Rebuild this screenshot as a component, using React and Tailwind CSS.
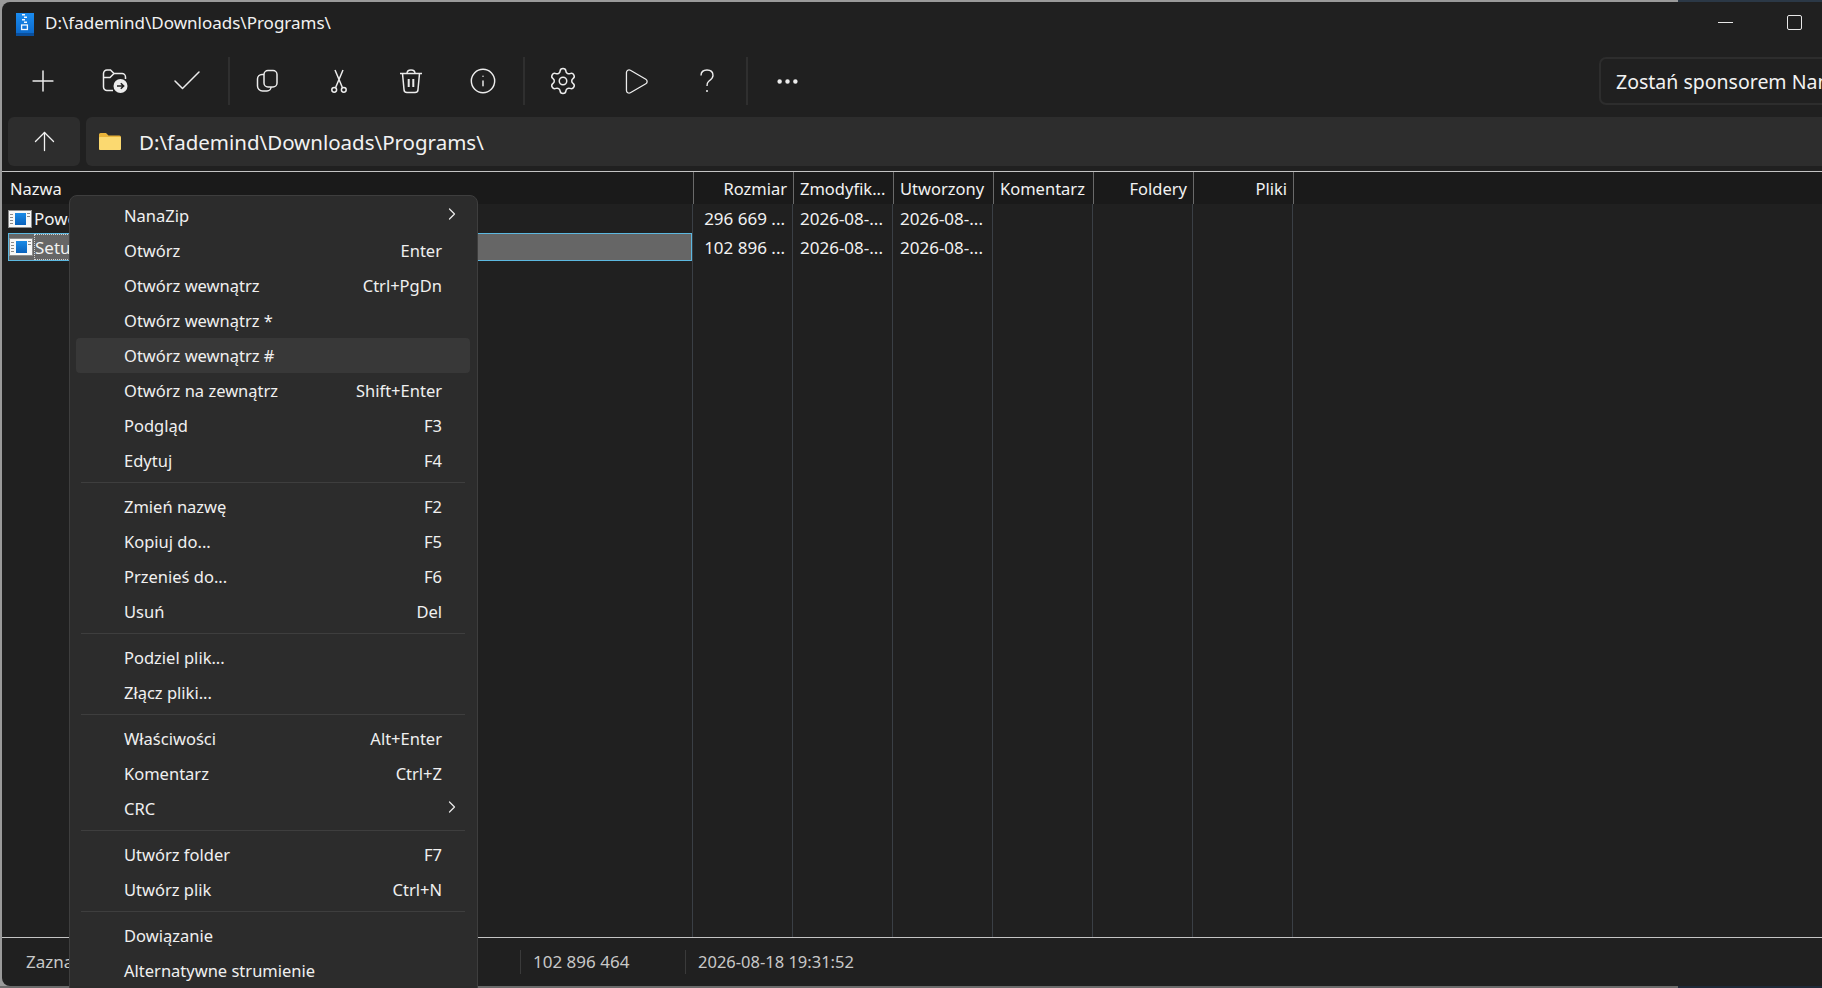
import React from 'react'
import { Plus, Check, Info, Settings, Play, MoreHorizontal, ArrowUp, ChevronRight } from 'lucide-react'

const font = "font-['Noto_Sans',sans-serif]"

const menu = [
  [{ t: 'NanaZip', arrow: true }, { t: 'Otwórz', k: 'Enter' }, { t: 'Otwórz wewnątrz', k: 'Ctrl+PgDn' }, { t: 'Otwórz wewnątrz *' }, { t: 'Otwórz wewnątrz #', hover: true }, { t: 'Otwórz na zewnątrz', k: 'Shift+Enter' }, { t: 'Podgląd', k: 'F3' }, { t: 'Edytuj', k: 'F4' }],
  [{ t: 'Zmień nazwę', k: 'F2' }, { t: 'Kopiuj do...', k: 'F5' }, { t: 'Przenieś do...', k: 'F6' }, { t: 'Usuń', k: 'Del' }],
  [{ t: 'Podziel plik...' }, { t: 'Złącz pliki...' }],
  [{ t: 'Właściwości', k: 'Alt+Enter' }, { t: 'Komentarz', k: 'Ctrl+Z' }, { t: 'CRC', arrow: true }],
  [{ t: 'Utwórz folder', k: 'F7' }, { t: 'Utwórz plik', k: 'Ctrl+N' }],
  [{ t: 'Dowiązanie' }, { t: 'Alternatywne strumienie' }],
]

const columns = [
  { name: 'Rozmiar', right: true, rows: ['296 669 ...', '102 896 ...'] },
  { name: 'Zmodyfik...', rows: ['2026-08-...', '2026-08-...'] },
  { name: 'Utworzony', rows: ['2026-08-...', '2026-08-...'] },
  { name: 'Komentarz', rows: [] },
  { name: 'Foldery', right: true, rows: [] },
  { name: 'Pliki', right: true, rows: [] },
]

function ToolBtn({ children }) {
  return <div className="w-[72px] h-[48px] flex items-center justify-center text-[#ececec]">{children}</div>
}

function ToolSep({ className }) {
  return <div className={`w-[2px] h-[48px] bg-[#2f2f2f] ${className}`} />
}

function FolderGo() {
  return (
    <svg width="26" height="24" viewBox="0 0 26 24" fill="none" stroke="currentColor" strokeWidth="1.5">
      <path d="M11 21.5H5A3.5 3.5 0 0 1 1.5 18V4.5A3.5 3.5 0 0 1 5 1H8.5L12 4.5H20A3.5 3.5 0 0 1 23.5 8V10" />
      <path d="M1.5 8.5H8L12 4.5" />
      <circle cx="18.5" cy="17" r="7" fill="currentColor" stroke="none" />
      <path d="M15 17h6.5M18.8 14.2l2.9 2.8-2.9 2.8" stroke="#202020" strokeWidth="1.5" />
    </svg>
  )
}

function CopyIcon() {
  return (
    <svg width="24" height="24" viewBox="0 0 24 24" fill="none" stroke="currentColor" strokeWidth="1.5">
      <rect x="9" y="1.5" width="13" height="16.5" rx="4" />
      <path d="M9 5.5H7A4.5 4.5 0 0 0 2.5 10V17A5 5 0 0 0 7.5 22H12A4 4 0 0 0 16 18" />
    </svg>
  )
}

function CutIcon() {
  return (
    <svg width="16" height="24" viewBox="0 0 16 24" fill="none" stroke="currentColor" strokeWidth="1.5">
      <circle cx="3.2" cy="20.8" r="2.4" />
      <circle cx="12.8" cy="20.8" r="2.4" />
      <path d="M4.5 18.8L12 1M11.5 18.8L4 1" />
    </svg>
  )
}

function TrashIcon() {
  return (
    <svg width="24" height="25" viewBox="0 0 24 25" fill="none" stroke="currentColor" strokeWidth="1.5">
      <path d="M1 4.5H23" />
      <path d="M8 4.5C8 2 9.5 1 12 1S16 2 16 4.5" />
      <path d="M3.5 4.5L5 20.5A3 3 0 0 0 8 23.5H16A3 3 0 0 0 19 20.5L20.5 4.5" />
      <path d="M9.7 10V18M14.3 10V18" strokeWidth="2" />
    </svg>
  )
}

function HelpIcon() {
  return (
    <svg width="14" height="24" viewBox="0 0 14 24" fill="none" stroke="currentColor" strokeWidth="1.4">
      <path d="M1 6.5C1 3 3.5 1 7 1S13 3 13 6.5C13 9.5 10.5 11 8.5 12.5C7.5 13.3 7 14.5 7 17" />
      <circle cx="7" cy="22" r="1" fill="currentColor" stroke="none" />
    </svg>
  )
}

function ZipIcon() {
  return (
    <svg width="18" height="23" viewBox="0 0 18 23">
      <defs>
        <linearGradient id="zipBlue" x1="0" y1="0" x2="0" y2="1">
          <stop offset="0" stopColor="#1b8cf0" />
          <stop offset="1" stopColor="#0a66c8" />
        </linearGradient>
      </defs>
      <rect width="18" height="23" fill="url(#zipBlue)" />
      <rect y="20" width="18" height="3" fill="#0a4f9c" />
      <path d="M6 1h3v1.5H6zM8 3.5h3V5H8zM6 6h3v1.5H6zM8 8.500h3V10H8z" fill="#f2f8fe" />
      <rect x="5.600" y="12" width="5.800" height="4.500" fill="none" stroke="#f2f8fe" strokeWidth="1.300" />
    </svg>
  )
}

function FileIcon() {
  return (
    <svg width="24" height="18" viewBox="0 0 24 18" className="shrink-0">
      <defs>
        <linearGradient id="fileBlue" x1="0" y1="0" x2="0" y2="1">
          <stop offset="0" stopColor="#1a8ae6" />
          <stop offset="1" stopColor="#0a62bd" />
        </linearGradient>
      </defs>
      <rect width="24" height="18" fill="#8c8c8c" />
      <rect x="1" y="1" width="22" height="16" fill="#f7f7f7" />
      <path d="M2 4h3v1H2zM2 7h3v1H2zM2 10h3v1H2zM2 13h3v1H2zM19 3h3v1h-3zM19 6h3v1h-3z" fill="#8a8a8a" />
      <rect x="7" y="3" width="11" height="12" fill="url(#fileBlue)" />
    </svg>
  )
}

function FolderIcon() {
  return (
    <svg width="22" height="17" viewBox="0 0 22 17">
      <path d="M0 1.500A1.500 1.500 0 0 1 1.500 0H7l2.500 2.500h11A1.500 1.500 0 0 1 22 4v11.500a1.500 1.500 0 0 1-1.500 1.500h-19A1.500 1.500 0 0 1 0 15.500z" fill="#e9b43a" />
      <path d="M0 5a1 1 0 0 1 1-1h20a1 1 0 0 1 1 1v10.500a1.500 1.500 0 0 1-1.500 1.500h-19A1.500 1.500 0 0 1 0 15.500z" fill="#fbd970" />
    </svg>
  )
}

function MenuRow({ item }) {
  return (
    <div className={`relative h-[35px] ml-[6px] mr-[7px] pl-[48px] pr-[28px] pt-[2px] flex items-center justify-between rounded-[4px] ${item.hover ? 'bg-[#383838]' : ''}`}>
      <span>{item.t}</span>
      {item.k && <span>{item.k}</span>}
      {item.arrow && <ChevronRight size={20} strokeWidth={1.5} className="absolute right-[8px] top-[6px] text-[#e8e8e8]" />}
    </div>
  )
}

export default function App() {
  return (
    <div className={`relative w-[1822px] h-[988px] overflow-hidden bg-[#9a9a9a] ${font}`}>
      {/* outer desktop strips */}
      <div className="absolute top-0 left-[1678px] right-0 h-[2px] bg-[#2b3846]" />
      <div className="absolute bottom-0 left-0 right-0 h-[2px] flex">
        <div className="w-[1678px] bg-[#6b6b6b]" />
        <div className="flex-1 bg-[#1f2a38]" />
      </div>

      <div className="ml-[2px] mt-[2px] h-[984px] flex flex-col bg-[#202020] rounded-l-lg overflow-hidden text-[#f2f2f2]">
        {/* title bar */}
        <div className="h-[44px] shrink-0 flex items-center pl-[14px]">
          <ZipIcon />
          <span className="ml-[11px] text-[17px] mt-[-2px]">D:\fademind\Downloads\Programs\</span>
          <div className="ml-auto flex items-center pr-[20px] gap-[54px] mt-[-3px]">
            <div className="w-[15px] h-px bg-[#e8e8e8]" />
            <div className="w-[15px] h-[15px] border border-[#e8e8e8] rounded-[2px]" />
          </div>
        </div>

        {/* toolbar */}
        <div className="h-[48px] mt-[11px] shrink-0 flex items-center pl-[5px]">
          <ToolBtn><Plus size={34} strokeWidth={1.05} /></ToolBtn>
          <ToolBtn><FolderGo /></ToolBtn>
          <ToolBtn><Check size={36} strokeWidth={1} /></ToolBtn>
          <ToolSep className="ml-[5px] mr-[1px]" />
          <ToolBtn><CopyIcon /></ToolBtn>
          <ToolBtn><CutIcon /></ToolBtn>
          <ToolBtn><TrashIcon /></ToolBtn>
          <ToolBtn><Info size={28} strokeWidth={1.25} /></ToolBtn>
          <ToolSep className="ml-[4px] mr-[2px]" />
          <ToolBtn><Settings size={30} strokeWidth={1.2} /></ToolBtn>
          <ToolBtn><Play size={31} strokeWidth={1} /></ToolBtn>
          <ToolBtn><HelpIcon /></ToolBtn>
          <ToolSep className="ml-[3px] mr-[3px]" />
          <ToolBtn><MoreHorizontal size={27} strokeWidth={2} /></ToolBtn>
          <div className="ml-auto -mr-[60px] w-[283px] h-[48px] shrink-0 flex items-center pl-[15px] pt-[2px] border-2 border-[#2d2d2d] rounded-[7px] text-[19.5px] whitespace-nowrap overflow-hidden">
            Zostań sponsorem NanaZip
          </div>
        </div>

        {/* address bar */}
        <div className="h-[49px] mt-[12px] shrink-0 flex gap-[6px] pl-[6px]">
          <div className="w-[72px] flex items-center justify-center bg-[#2d2d2d] rounded-[6px]">
            <ArrowUp size={31} strokeWidth={1} />
          </div>
          <div className="flex-1 flex items-center pl-[13px] bg-[#2d2d2d] rounded-l-[6px]">
            <FolderIcon />
            <span className="ml-[18px] text-[20.500px] mt-[1px]">D:\fademind\Downloads\Programs\</span>
          </div>
        </div>

        {/* file list */}
        <div className="mt-[5px] flex-1 flex flex-col border-t border-b border-[#c4c4c4] min-h-0 text-[17px]">
          <div className="h-[32px] shrink-0 flex bg-[#1a1a1a] text-[16.500px]">
            <div className="w-[692px] pl-[8px] pt-[2px] flex items-center border-r border-[#6a6a6a]">Nazwa</div>
            {columns.map((c) => (
              <div key={c.name} className={`w-[100px] px-[6px] pt-[2px] flex items-center border-r border-[#6a6a6a] whitespace-nowrap ${c.right ? 'justify-end' : ''}`}>{c.name}</div>
            ))}
          </div>
          <div className="flex-1 flex">
            <div className="w-[691px] pt-[1px] border-r border-[#3a3f45]">
              <div className="h-[28px] pl-[6px] flex items-center gap-[2px]"><FileIcon />PowerToysSetup.exe</div>
              <div className="h-[28px] ml-[6px] flex items-center gap-[1px] bg-[#666666] border border-[#5cb8e0]">
                <FileIcon />
                <span className="h-[26px] flex items-center pt-[2px] pr-[4px] border border-dotted border-[#d0d0d0]">Setup.exe</span>
              </div>
            </div>
            {columns.map((c) => (
              <div key={c.name} className="w-[100px] pt-[1px] border-r border-[#3a3f45]">
                {c.rows.map((r, i) => (
                  <div key={i} className={`h-[28px] flex items-center whitespace-nowrap px-[7px] ${i === 1 ? 'pt-[2px]' : ''} ${c.right ? 'justify-end' : ''}`}>{r}</div>
                ))}
              </div>
            ))}
          </div>
        </div>

        {/* status bar */}
        <div className="h-[48px] shrink-0 flex items-center text-[17px] text-[#c8c8c8]">
          <div className="w-[518px] pl-[24px]">Zaznaczono 1 element</div>
          <div className="w-[165px] h-[24px] flex items-center pl-[12px] border-l border-[#3a3a3a]">102 896 464</div>
          <div className="h-[24px] flex items-center pl-[12px] border-l border-[#3a3a3a] text-[16.500px]">2026-08-18 19:31:52</div>
        </div>
      </div>

      {/* context menu */}
      <div className="absolute left-[69px] top-[195px] w-[409px] h-[800px] pt-[2px] bg-[#2c2c2c] border border-[#3e3e3e] rounded-[8px] text-[16.500px] text-[#f0f0f0]">
        {menu.map((group, i) => (
          <div key={i}>
            {i > 0 && <div className="h-[11px] pt-[4px] ml-[11px] mr-[12px]"><div className="h-px bg-[#3e3e3e]" /></div>}
            {group.map((item) => <MenuRow key={item.t} item={item} />)}
          </div>
        ))}
      </div>
    </div>
  )
}
